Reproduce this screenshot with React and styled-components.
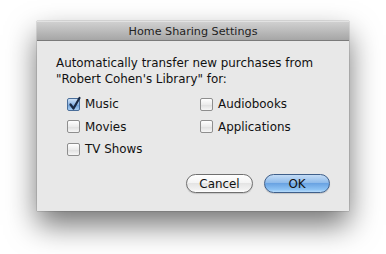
import React from "react";
import styled, { createGlobalStyle } from "styled-components";

const Global = createGlobalStyle`
  html, body { margin: 0; padding: 0; background: #ffffff; }
  body { width: 386px; height: 254px; overflow: hidden; font-family: "DejaVu Sans", "Liberation Sans", sans-serif; }
`;

const Stage = styled.div`
  display: flex;
  justify-content: flex-start;
  padding: 21px 0 0 37px;
`;

const Dialog = styled.div`
  width: 312px;
  height: 190px;
  display: flex;
  flex-direction: column;
  background: #e8e8e8;
  box-shadow: 0 14px 28px rgba(0, 0, 0, 0.55), 0 0 1px rgba(0, 0, 0, 0.6);
`;

const TitleBar = styled.div`
  display: flex;
  align-items: center;
  justify-content: center;
  background: linear-gradient(#d0d0d0, #a6a6a6);
  border-bottom: 1px solid #7a7a7a;
  border-top: 1px solid #e2e2e2;
  box-sizing: border-box;
  height: 20px;
  font-size: 11.2px;
  color: #222;
`;

const Body = styled.div`
  flex: 1;
  display: flex;
  flex-direction: column;
  padding: 14px 19px 18px 19px;
  font-size: 11.9px;
  color: #111;
`;

const Message = styled.p`
  margin: 0;
  line-height: 16px;
`;

const Options = styled.div`
  display: grid;
  grid-template-columns: 133px 1fr;
  grid-auto-rows: 22.5px;
  margin: 6px 0 0 11px;
`;

const Option = styled.label`
  display: flex;
  align-items: center;
  gap: 5px;
`;

const Box = styled.span`
  width: 13px;
  height: 13px;
  box-sizing: border-box;
  border-radius: 2px;
  border: 1px solid ${p => (p.$checked ? "#4a6e9a" : "#8e8e8e")};
  background: ${p =>
    p.$checked
      ? "linear-gradient(#cfe2f7, #8db5e3 50%, #6b9fd9 51%, #a9cdf2)"
      : "linear-gradient(#ffffff, #ececec 50%, #dedede 51%, #f6f6f6)"};
  position: relative;
  flex: none;
`;

const Check = styled.svg`
  position: absolute;
  left: 0px;
  top: -3px;
  overflow: visible;
`;

const Footer = styled.div`
  margin-top: auto;
  display: flex;
  justify-content: flex-end;
  gap: 11px;
`;

const Button = styled.button`
  width: ${p => p.$w}px;
  height: 19px;
  box-sizing: border-box;
  border-radius: 10px;
  font-family: "DejaVu Sans", "Liberation Sans", sans-serif;
  font-size: 11.9px;
  color: #111;
  padding: 0;
  border: 1px solid ${p => (p.$primary ? "#3f5f8a" : "#6f6f6f")};
  background: ${p =>
    p.$primary
      ? "linear-gradient(#c4dcf6, #8fbbea 45%, #6aa3e2 50%, #8cc2f4 85%, #b8dcfa)"
      : "linear-gradient(#ffffff, #f4f4f4 45%, #e4e4e4 50%, #f2f2f2 85%, #ffffff)"};
  box-shadow: 0 1px 1px rgba(0, 0, 0, 0.15);
`;

function CheckBox({ checked }) {
  return (
    <Box $checked={checked}>
      {checked && (
        <Check width="13" height="15" viewBox="0 0 13 15">
          <path d="M2.5 8.5 L5.5 12.5 L11.5 2" fill="none" stroke="#1b2a44" strokeWidth="2.2" strokeLinecap="round" strokeLinejoin="round" />
        </Check>
      )}
    </Box>
  );
}

const items = [
  ["Music", true],
  ["Audiobooks", false],
  ["Movies", false],
  ["Applications", false],
  ["TV Shows", false],
];

export default function App() {
  return (
    <>
      <Global />
      <Stage>
        <Dialog>
          <TitleBar>Home Sharing Settings</TitleBar>
          <Body>
            <Message>
              Automatically transfer new purchases from
              <br />
              "Robert Cohen's Library" for:
            </Message>
            <Options>
              {items.map(([label, checked]) => (
                <Option key={label}>
                  <CheckBox checked={checked} />
                  {label}
                </Option>
              ))}
            </Options>
            <Footer>
              <Button $w={67}>Cancel</Button>
              <Button $w={66} $primary>OK</Button>
            </Footer>
          </Body>
        </Dialog>
      </Stage>
    </>
  );
}
